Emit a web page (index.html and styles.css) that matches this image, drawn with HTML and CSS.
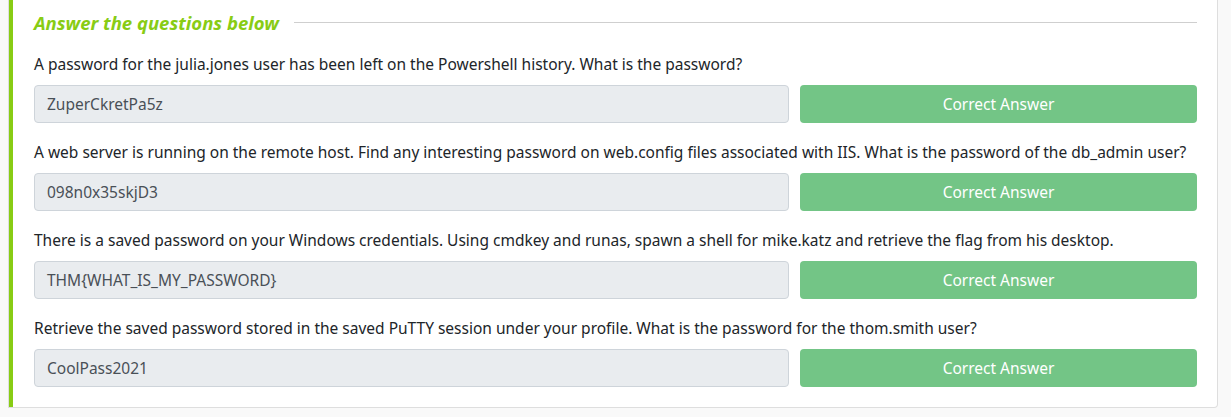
FILE: index.html
```html
<!DOCTYPE html>
<html>
<head>
<meta charset="utf-8">
<link rel="stylesheet" href="styles.css">
</head>
<body>
<div class="card">
  <div class="title-row">
    <h3 class="title">Answer the questions below</h3>
    <div class="rule"></div>
  </div>
  <div class="question">
    <p class="q-text">A password for the julia.jones user has been left on the Powershell history. What is the password?</p>
    <div class="answer-row">
      <div class="answer-input">ZuperCkretPa5z</div>
      <button class="btn-correct">Correct Answer</button>
    </div>
  </div>
  <div class="question">
    <p class="q-text">A web server is running on the remote host. Find any interesting password on web.config files associated with IIS. What is the password of the db_admin user?</p>
    <div class="answer-row">
      <div class="answer-input">098n0x35skjD3</div>
      <button class="btn-correct">Correct Answer</button>
    </div>
  </div>
  <div class="question">
    <p class="q-text">There is a saved password on your Windows credentials. Using cmdkey and runas, spawn a shell for mike.katz and retrieve the flag from his desktop.</p>
    <div class="answer-row">
      <div class="answer-input">THM{WHAT_IS_MY_PASSWORD}</div>
      <button class="btn-correct">Correct Answer</button>
    </div>
  </div>
  <div class="question">
    <p class="q-text">Retrieve the saved password stored in the saved PuTTY session under your profile. What is the password for the thom.smith user?</p>
    <div class="answer-row">
      <div class="answer-input">CoolPass2021</div>
      <button class="btn-correct">Correct Answer</button>
    </div>
  </div>
</div>
</body>
</html>
```
FILE: styles.css
```css
html, body {
  margin: 0;
  padding: 0;
  background: #f9f9f9;
  font-family: "Noto Sans", "Open Sans", sans-serif;
}
body {
  padding: 0 13px 10px 9px;
  height: 417px;
  box-sizing: border-box;
  overflow: hidden;
}
.card {
  margin-top: -10px;
  background: #fff;
  border: 1px solid #dedede;
  border-left: none;
  box-shadow: inset 4px 0 0 #88cc14;
  border-radius: 0 0 4px 0;
  padding: 18px 20px 20px 25px;
  position: relative;
}
.card::before {
  content: "";
  position: absolute;
  left: -1px;
  top: 0;
  bottom: -1px;
  width: 1px;
  background: #dedede;
}
.title-row {
  display: flex;
  align-items: center;
  gap: 15px;
  height: 26px;
}
.title {
  margin: 0;
  font-size: 18.5px;
  font-weight: 700;
  font-style: italic;
  color: #88cc14;
  white-space: nowrap;
}
.rule {
  flex: 1;
  height: 1px;
  background: #cfcfcf;
}
.question {
  margin-top: 18px;
}
.q-text {
  margin: 0 0 10px 0;
  font-size: 15.5px;
  line-height: 22px;
  color: #212529;
}
.answer-row {
  display: flex;
  gap: 11px;
}
.answer-input {
  flex: 0 0 755px;
  box-sizing: border-box;
  height: 38px;
  background: #e9ecef;
  border: 1px solid #ced4da;
  border-radius: 4px;
  padding: 0 12px;
  display: flex;
  align-items: center;
  font-size: 15.5px;
  color: #495057;
}
.btn-correct {
  flex: 1;
  height: 38px;
  background: #73c586;
  border: none;
  border-radius: 4px;
  color: #fff;
  font-family: inherit;
  font-size: 15.5px;
}
```
